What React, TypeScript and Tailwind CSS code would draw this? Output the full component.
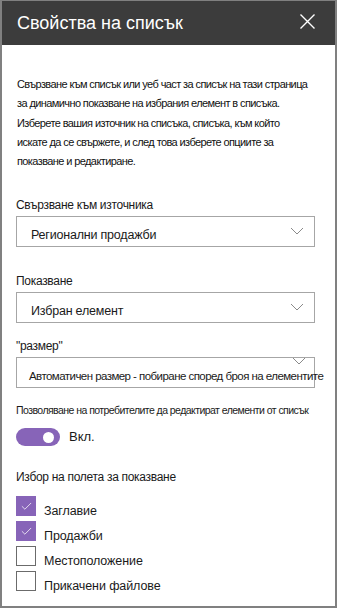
import { Check } from "lucide-react";

const font = { fontFamily: '"Liberation Sans", Arial, sans-serif' };

function Chevron({ className }: { className: string }) {
  return (
    <svg width="24" height="24" viewBox="0 0 24 24" fill="none" className={"absolute " + className}>
      <path d="M6 9l6 6 6-6" stroke="#8a8a8a" strokeWidth="1" />
    </svg>
  );
}

function Dropdown({ value, small }: { value: string; small?: boolean }) {
  return (
    <div className="relative h-[31px] w-[299px] border border-[#a6a6a6] bg-white">
      <Chevron className={small ? "right-[3px] top-[-9px]" : "right-[5px] top-[2px]"} />
      {small ? (
        <div className="relative whitespace-nowrap pl-[12px] pt-[11px] text-[11.5px] leading-[14px] tracking-[-0.55px] text-[#1a1a1a]">
          {value}
        </div>
      ) : (
        <div className="relative whitespace-nowrap pl-[14px] pt-[11px] text-[12.5px] leading-[15px] tracking-[-0.2px] text-[#1a1a1a]">
          {value}
        </div>
      )}
    </div>
  );
}

function Box({ checked, label }: { checked: boolean; label: string }) {
  return (
    <div className="flex h-[20px] items-start">
      {checked ? (
        <div className="flex h-[20px] w-[20px] shrink-0 items-center justify-center bg-[#8764b8]">
          <Check size={13} strokeWidth={1.4} className="text-white" />
        </div>
      ) : (
        <div className="h-[20px] w-[20px] shrink-0 border border-[#6b6b6b] bg-white" />
      )}
      <span className="ml-[8px] mt-[7px] whitespace-nowrap text-[12.5px] leading-[16px] tracking-[-0.1px] text-[#1a1a1a]">
        {label}
      </span>
    </div>
  );
}

export default function App() {
  return (
    <div
      style={font}
      className="box-border h-[608px] w-[337px] overflow-hidden border-2 border-t border-[#808080] bg-white"
    >
      <div className="flex h-[44px] items-center justify-between bg-[#3c3c3c] pl-[15px] pr-[20px]">
        <span className="text-[18px] leading-[22px] text-white">Свойства на списък</span>
        <svg width="15" height="15" viewBox="0 0 15 15" className="mb-[3px]">
          <path d="M0.5 0.5L14.5 14.5M14.5 0.5L0.5 14.5" stroke="#fff" strokeWidth="1.4" />
        </svg>
      </div>

      <div className="pl-[14px] pr-[20px]">
        <p className="mt-[30px] whitespace-nowrap pl-[1px] text-[11px] leading-[19.25px] tracking-[-0.6px] text-[#111]">
          Свързване към списък или уеб част за списък на тази страница
          <br />
          за динамично показване на избрания елемент в списъка.
          <br />
          Изберете вашия източник на списъка, списъка, към който
          <br />
          искате да се свържете, и след това изберете опциите за
          <br />
          показване и редактиране.
        </p>

        <div className="mt-[26px] text-[12px] leading-[16px] tracking-[-0.3px] text-[#1a1a1a]">
          Свързване към източника
        </div>
        <div className="mt-[3px]">
          <Dropdown value="Регионални продажби" />
        </div>

        <div className="mt-[26px] text-[12px] leading-[16px] tracking-[-0.3px] text-[#1a1a1a]">Показване</div>
        <div className="mt-[3px]">
          <Dropdown value="Избран елемент" />
        </div>

        <div className="mt-[15px] text-[12px] leading-[16px] tracking-[-0.3px] text-[#1a1a1a]">"размер"</div>
        <div className="mt-[3px]">
          <Dropdown small value="Автоматичен размер - побиране според броя на елементите" />
        </div>

        <div className="mt-[14px] whitespace-nowrap text-[10.5px] leading-[16px] tracking-[-0.55px] text-[#1a1a1a]">
          Позволяване на потребителите да редактират елементи от списък
        </div>
        <div className="mt-[10px] flex items-center">
          <div className="flex h-[18px] w-[44px] items-center justify-end rounded-full bg-[#8764b8] pr-[6px]">
            <div className="h-[11px] w-[11px] rounded-full bg-white" />
          </div>
          <span className="ml-[9px] text-[13px] leading-[16px] text-[#1a1a1a]">Вкл.</span>
        </div>

        <div className="mt-[23px] text-[12px] leading-[16px] tracking-[-0.3px] text-[#1a1a1a]">
          Избор на полета за показване
        </div>
        <div className="mt-[11px] flex flex-col gap-[5px]">
          <Box checked label="Заглавие" />
          <Box checked label="Продажби" />
          <Box checked={false} label="Местоположение" />
          <Box checked={false} label="Прикачени файлове" />
        </div>
      </div>
    </div>
  );
}
